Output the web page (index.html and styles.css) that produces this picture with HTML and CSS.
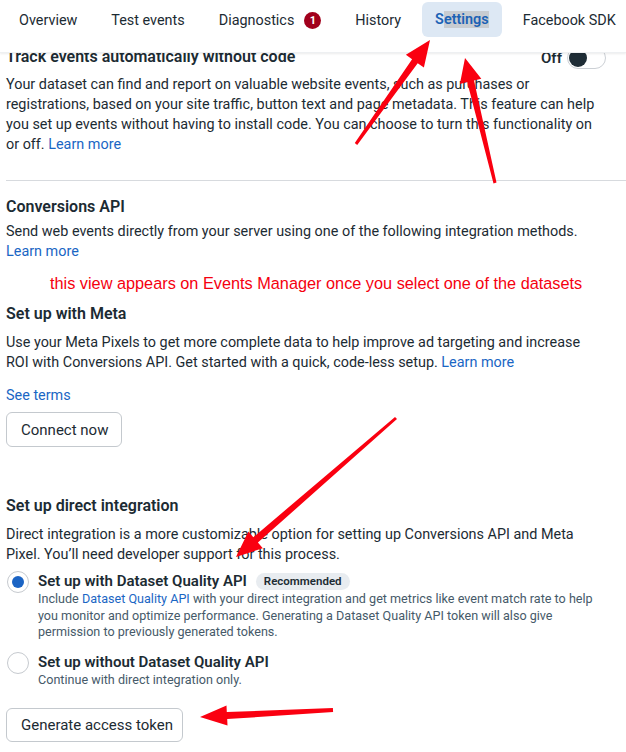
FILE: index.html
```html
<!DOCTYPE html>
<html lang="en">
<head>
  <meta charset="UTF-8">
  <meta name="viewport" content="width=device-width, initial-scale=1.0">
  <title>Dataset Settings</title>
  <link rel="stylesheet" href="styles.css">
</head>
<body>
  <header class="tabs">
    <a class="tab">Overview</a>
    <a class="tab">Test events</a>
    <a class="tab">Diagnostics <span class="count">1</span></a>
    <a class="tab">History</a>
    <a class="tab active">S<span class="sel">ettings</span></a>
    <a class="tab">Facebook SDK</a>
  </header>

  <main class="content">
    <section class="auto-track">
      <div class="head-row">
        <h2>Track events automatically without code</h2>
        <div class="switch">Off <span class="toggle"><span class="knob"></span></span></div>
      </div>
      <p class="text">Your dataset can find and report on valuable website events, such as purchases or registrations, based on your site traffic, button text and page metadata. This feature can help you set up events without having to install code. You can choose to turn this functionality on or off. <a class="link">Learn more</a></p>
    </section>

    <hr class="divider">

    <section class="capi">
      <h2>Conversions API</h2>
      <p class="text intro">Send web events directly from your server using one of the following integration methods. <a class="link">Learn more</a></p>

      <p class="note">this view appears on Events Manager once you select one of the datasets</p>

      <h3>Set up with Meta</h3>
      <p class="text">Use your Meta Pixels to get more complete data to help improve ad targeting and increase ROI with Conversions API. Get started with a quick, code-less setup. <a class="link">Learn more</a></p>
      <a class="link terms">See terms</a>
      <button class="btn connect">Connect now</button>

      <h3 class="direct">Set up direct integration</h3>
      <p class="text">Direct integration is a more customizable option for setting up Conversions API and Meta Pixel. You’ll need developer support for this process.</p>

      <label class="option first">
        <span class="radio checked"></span>
        <span class="opt-body">
          <span class="opt-title">Set up with Dataset Quality API <span class="tag">Recommended</span></span>
          <span class="opt-desc">Include <a class="link">Dataset Quality API</a> with your direct integration and get metrics like event match rate to help you monitor and optimize performance. Generating a Dataset Quality API token will also give permission to previously generated tokens.</span>
        </span>
      </label>
      <label class="option">
        <span class="radio"></span>
        <span class="opt-body">
          <span class="opt-title">Set up without Dataset Quality API</span>
          <span class="opt-desc">Continue with direct integration only.</span>
        </span>
      </label>

      <button class="btn generate">Generate access token</button>
    </section>
  </main>

  <!-- red callout arrows drawn over the page -->
  <svg class="marks" width="626" height="752" viewBox="0 0 626 752">
    <polygon points="357.2,144.9 417.7,63.2 423.9,67.6 430,40 405.9,54.8 412.1,59.2 354.8,143.1"/>
    <polygon points="496.5,182.6 474,80.5 481.3,78.7 465,58 459.9,83.9 467.2,82.1 493.5,183.4"/>
    <polygon points="395,416.9 253.3,537.3 248.4,531.6 236,557 262.8,548.2 257.9,542.5 397,419.1"/>
    <polygon points="332.9,708 226.8,712.1 226.5,705.6 200,717 227.5,725.6 227.2,719.1 333.1,712"/>
  </svg>
</body>
</html>
```

FILE: styles.css
```css
body {
  margin: 0;
  width: 626px;
  height: 752px;
  overflow: hidden;
  position: relative;
  background: #fff;
  color: #1c2b33;
  font-family: Roboto, "Liberation Sans", sans-serif;
  font-size: 14.4px;
}

a {
  cursor: pointer;
}

.link {
  color: #1a66c4;
  text-decoration: none;
}

/* top tab bar */
.tabs {
  position: relative;
  z-index: 1;
  height: 53px;
  box-sizing: border-box;
  padding: 3px 0 0 6px;
  display: flex;
  align-items: flex-start;
  gap: 8px;
  background: #fff;
  box-shadow: 0 1px 2px rgba(0, 0, 0, 0.08);
  border-bottom: 1px solid #eef0f2;
}

.tab {
  height: 35px;
  padding: 0 13px;
  display: flex;
  align-items: center;
  gap: 10px;
  font-size: 14.4px;
  color: #1c2b33;
  white-space: nowrap;
  border-radius: 6px;
}

.tab.active {
  background: #dde8f4;
  color: #1b62b5;
  font-weight: 600;
  gap: 0;
  margin-top: -1px;
}

.sel {
  background: #c7ccd1;
}

.count {
  width: 17px;
  height: 17px;
  border-radius: 50%;
  background: #a1001c;
  color: #fff;
  font-size: 11px;
  font-weight: 700;
  display: inline-flex;
  align-items: center;
  justify-content: center;
}

/* page body */
.content {
  margin-top: -6px;
  padding-left: 6px;
}

h2, h3 {
  margin: 0;
  font-size: 16px;
  line-height: 20px;
  font-weight: 600;
}

.text {
  margin: 8px 0 0;
  width: 598px;
  line-height: 20px;
  font-size: 14.4px;
}

.head-row {
  width: 600px;
  display: flex;
  justify-content: space-between;
  align-items: center;
  height: 20px;
}

.switch {
  display: flex;
  align-items: center;
  gap: 5px;
  font-size: 15px;
  font-weight: 600;
  margin-top: 2px;
}

.toggle {
  width: 36px;
  height: 20px;
  border: 1px solid #ccd0d5;
  border-radius: 11px;
  display: flex;
  align-items: center;
  padding-left: 1px;
}

.knob {
  width: 18px;
  height: 18px;
  border-radius: 50%;
  background: #1f2d36;
}

.divider {
  margin: 25px 0 16px;
  border: 0;
  border-top: 1px solid #d7dade;
}

.capi .intro {
  margin-top: 5px;
}

.note {
  margin: 11px 0 0;
  padding-left: 44px;
  line-height: 20px;
  font-family: "Liberation Sans", Arial, sans-serif;
  font-size: 16.3px;
  color: #f5000f;
}

.capi h3 {
  margin-top: 11px;
}

.capi h3 + .text {
  margin-top: 9px;
}

.terms {
  display: block;
  margin-top: 13px;
  line-height: 20px;
}

.btn {
  display: block;
  box-sizing: border-box;
  height: 35px;
  padding: 0 14px;
  border: 1px solid #c4c9ce;
  border-radius: 6px;
  background: #fff;
  color: #1c2b33;
  font-family: inherit;
  font-size: 15px;
  white-space: nowrap;
  cursor: pointer;
}

.connect {
  margin-top: 6px;
  width: 116px;
}

.capi h3.direct {
  margin-top: 49px;
}

/* radio options */
.option {
  display: flex;
  gap: 9px;
  margin-top: 11px;
  width: 600px;
}

.option.first {
  margin-top: 6px;
}

.radio {
  flex: none;
  width: 22px;
  height: 22px;
  margin: 0 0 0 1px;
  box-sizing: border-box;
  border: 1px solid #c6cacf;
  border-radius: 50%;
  display: flex;
  align-items: center;
  justify-content: center;
}

.radio.checked::after {
  content: "";
  width: 12px;
  height: 12px;
  border-radius: 50%;
  background: #1b64c4;
}

.opt-body {
  display: flex;
  flex-direction: column;
}

.opt-title {
  display: flex;
  align-items: center;
  gap: 9px;
  font-size: 15px;
  font-weight: 600;
  line-height: 20px;
}

.tag {
  padding: 0 8px;
  height: 17px;
  line-height: 17px;
  border-radius: 9px;
  background: #e8ecf0;
  font-size: 11.5px;
  font-weight: 600;
}

.opt-desc {
  font-size: 12.6px;
  line-height: 16.5px;
  color: #465a69;
}

.generate {
  margin-top: 20px;
  width: 177px;
  height: 34px;
}

.marks {
  position: absolute;
  top: 0;
  left: 0;
  z-index: 2;
  pointer-events: none;
}

.marks polygon {
  fill: #fa0010;
}
```
